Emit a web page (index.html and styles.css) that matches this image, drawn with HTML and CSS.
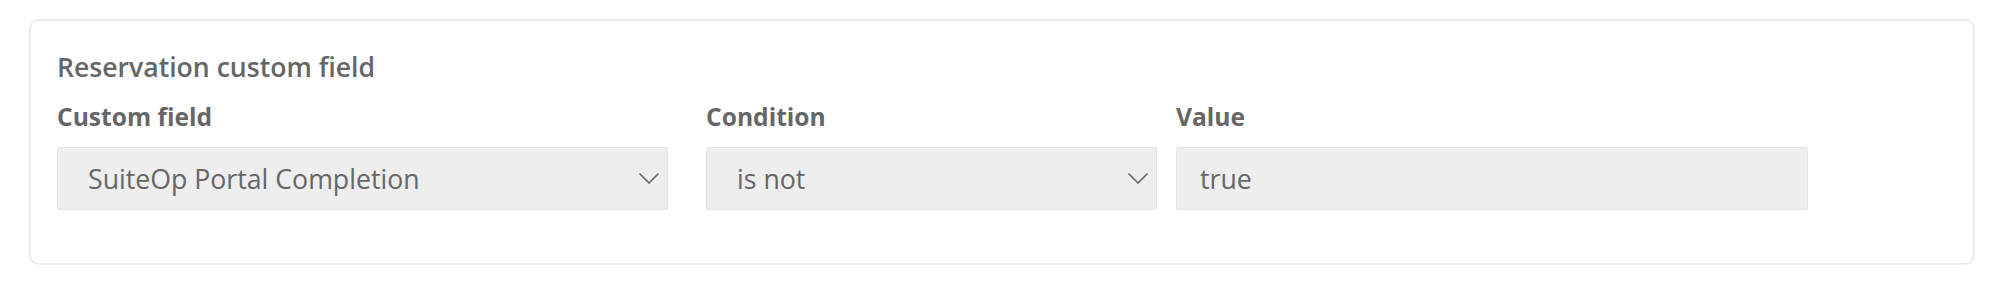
FILE: index.html
```html
<!DOCTYPE html>
<html lang="en">
<head>
<meta charset="utf-8">
<title>Reservation custom field</title>
<link rel="stylesheet" href="styles.css">
</head>
<body>
<div class="page">
  <section class="card">
    <h2 class="card-title">Reservation custom field</h2>
    <div class="fields">
      <div class="field field-custom">
        <label class="field-label">Custom field</label>
        <div class="control select">
          <span class="control-text">SuiteOp Portal Completion</span>
          <svg class="chevron" viewBox="0 0 20 11" width="20" height="11"><path d="M1 1 L10 10 L19 1" fill="none" stroke="#666" stroke-width="1.7" stroke-linecap="round" stroke-linejoin="round"/></svg>
        </div>
      </div>
      <div class="field field-condition">
        <label class="field-label">Condition</label>
        <div class="control select">
          <span class="control-text">is not</span>
          <svg class="chevron" viewBox="0 0 20 11" width="20" height="11"><path d="M1 1 L10 10 L19 1" fill="none" stroke="#666" stroke-width="1.7" stroke-linecap="round" stroke-linejoin="round"/></svg>
        </div>
      </div>
      <div class="field field-value">
        <label class="field-label">Value</label>
        <div class="control input">
          <span class="control-text">true</span>
        </div>
      </div>
    </div>
  </section>
</div>
</body>
</html>
```
FILE: styles.css
```css
html, body {
  margin: 0;
  padding: 0;
  background: #ffffff;
}

body {
  font-family: "Open Sans", "Noto Sans", "Liberation Sans", sans-serif;
  color: #666666;
}

.page {
  padding: 19px 25px 0 29px;
}

.card {
  border: 2px solid #ececec;
  border-radius: 10px;
  padding: 29px 26px 0 26px;
  height: 246px;
  box-sizing: border-box;
}

.card-title {
  margin: 0;
  font-size: 26.6px;
  line-height: 34px;
  font-weight: 600;
  color: #666666;
}

.fields {
  display: flex;
  align-items: flex-start;
  margin-top: 17px;
}

.field {
  flex: none;
}

.field-custom {
  width: 611px;
  margin-right: 38px;
}

.field-condition {
  width: 451px;
  margin-right: 19px;
}

.field-value {
  width: 632px;
}

.field-label {
  display: block;
  font-size: 24.6px;
  line-height: 32px;
  font-weight: 700;
  color: #666666;
  margin-bottom: 14px;
}

.control {
  height: 63px;
  box-sizing: border-box;
  background: #eeeeee;
  border: 1px solid #e4e4e4;
  border-radius: 2px;
  display: flex;
  align-items: center;
  justify-content: space-between;
}

.select {
  padding: 0 8px 0 30px;
}

.input {
  padding: 0 23px;
}

.control-text {
  font-size: 26.7px;
  line-height: 35px;
  color: #666666;
}

.chevron {
  display: block;
  flex: none;
}
```
